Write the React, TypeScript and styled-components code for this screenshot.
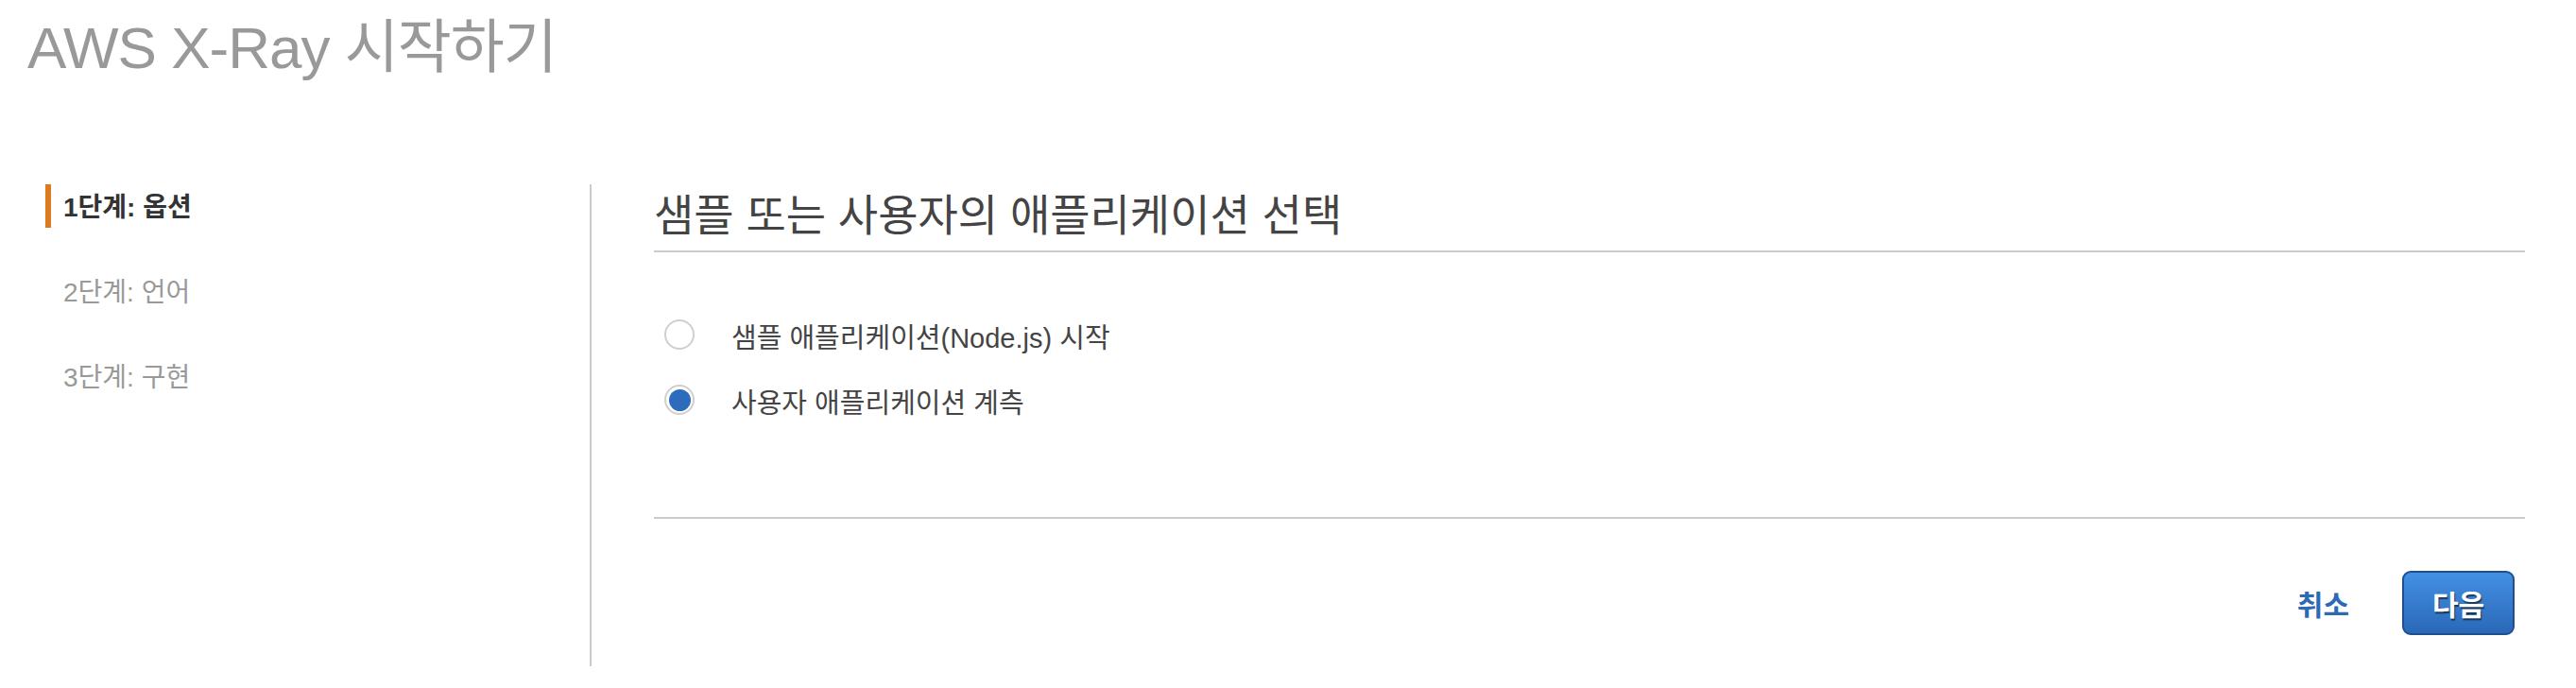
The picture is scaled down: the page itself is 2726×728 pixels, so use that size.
import React, { useState } from "react";
import styled, { createGlobalStyle } from "styled-components";

type Option = { value: string, label: string };

const steps = ["1단계: 옵션", "2단계: 언어", "3단계: 구현"];

const options: Option[] = [
    { value: "sample", label: "샘플 애플리케이션(Node.js) 시작" },
    { value: "instrument", label: "사용자 애플리케이션 계측" }
];

export default () => {
    const [activeStep] = useState<number>(0);
    const [selected, setSelected] = useState<string>("instrument");

    return (
        <Page>
            <GlobalStyle/>
            <Title>AWS X-Ray 시작하기</Title>
            <Workspace>
                <StepNav>
                    {steps.map((x, i) =>
                        <StepItem key={x} active={i === activeStep}>
                            {x}
                        </StepItem>
                    )}
                </StepNav>
                <Panel>
                    <PanelHeading>샘플 또는 사용자의 애플리케이션 선택</PanelHeading>
                    <RadioList>
                        {options.map(x =>
                            <RadioRow key={x.value} onClick={() => setSelected(x.value)}>
                                <RadioDot checked={selected === x.value}/>
                                <RadioText>{x.label}</RadioText>
                            </RadioRow>
                        )}
                    </RadioList>
                    <Footer>
                        <CancelButton type="button">취소</CancelButton>
                        <NextButton type="button">다음</NextButton>
                    </Footer>
                </Panel>
            </Workspace>
        </Page>
    );
};

const GlobalStyle = createGlobalStyle`
    *, *::before, *::after {
        box-sizing: border-box;
    }
    html, body {
        margin: 0;
        padding: 0;
        background: #fff;
    }
    body {
        font-family: "Liberation Sans", "Noto Sans CJK KR", sans-serif;
    }
`;

const Page = styled.div`
    width: 2726px;
    min-height: 728px;
`;

const Title = styled.h1`
    margin: 0;
    padding: 20px 0 0 29px;
    font-size: 62px;
    line-height: 62px;
    letter-spacing: -1px;
    font-weight: normal;
    color: #999;
`;

const Workspace = styled.div`
    display: flex;
    margin-top: 113px;
    height: 510px;
`;

const StepNav = styled.nav`
    display: flex;
    flex-direction: column;
    gap: 44px;
    width: 626px;
    padding-left: 48px;
    border-right: 2px solid #cbcbcb;
`;

const StepItem = styled.div<{ active: boolean }>`
    height: 46px;
    padding: 4px 0 0 13px;
    border-left: 6px solid ${p => p.active ? "#dc7a1e" : "transparent"};
    font-size: 28px;
    line-height: 42px;
    font-weight: ${p => p.active ? "bold" : "normal"};
    color: ${p => p.active ? "#333" : "#999"};
`;

const Panel = styled.section`
    flex: 1;
    display: flex;
    flex-direction: column;
    padding: 8px 54px 0 66px;
`;

const PanelHeading = styled.h2`
    margin: 0;
    padding-bottom: 12px;
    border-bottom: 2px solid #cbcbcb;
    font-size: 46px;
    line-height: 50px;
    font-weight: normal;
    color: #444;
`;

const RadioList = styled.div`
    display: flex;
    flex-direction: column;
    gap: 33px;
    margin-top: 71px;
    padding-left: 11px;
`;

const RadioRow = styled.label`
    display: flex;
    align-items: flex-start;
    gap: 39px;
    cursor: pointer;
`;

const RadioDot = styled.span<{ checked: boolean }>`
    position: relative;
    flex: none;
    width: 32px;
    height: 32px;
    border: 2px solid #cfcfcf;
    border-radius: 50%;
    background: #fff;
    &::after {
        content: "";
        position: absolute;
        inset: 2.5px;
        border-radius: 50%;
        background: #2d6bbd;
        display: ${p => p.checked ? "block" : "none"};
    }
`;

const RadioText = styled.span`
    margin-top: 4px;
    font-size: 29px;
    line-height: 32px;
    color: #444;
`;

const Footer = styled.div`
    display: flex;
    justify-content: flex-end;
    align-items: center;
    gap: 56px;
    margin-top: 104px;
    padding: 55px 11px 0 0;
    border-top: 2px solid #cbcbcb;
`;

const CancelButton = styled.button`
    padding: 0;
    border: none;
    background: none;
    font-family: inherit;
    font-size: 30px;
    font-weight: bold;
    color: #2d6ab5;
    cursor: pointer;
`;

const NextButton = styled.button`
    width: 119px;
    height: 68px;
    padding: 0;
    border: 2px solid #1f4f8c;
    border-radius: 9px;
    background: linear-gradient(#4390e3, #2a68b7);
    font-family: inherit;
    font-size: 30px;
    font-weight: bold;
    color: #fff;
    text-shadow: 1px 2px 1px rgba(0, 0, 0, 0.55);
    cursor: pointer;
`;
